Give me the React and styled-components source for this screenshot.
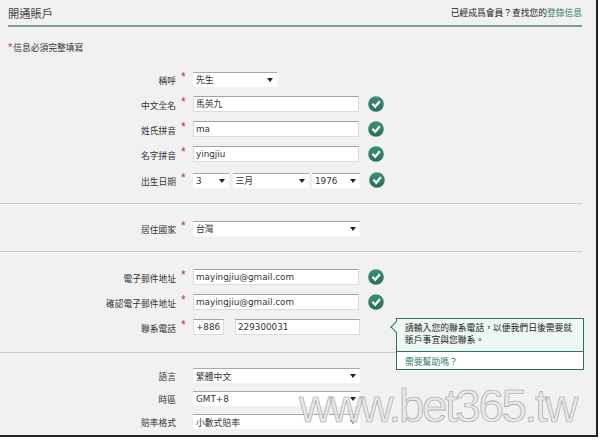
import React from 'react';
import styled, { createGlobalStyle } from 'styled-components';

const GlobalStyle = createGlobalStyle`
  html, body {
    margin: 0;
    padding: 0;
    background: #fff;
  }
`;

const CheckIcon = () => (
  <CheckSvg viewBox="0 0 16 16">
    <defs>
      <linearGradient id="checkFill" x1="0" y1="0" x2="0" y2="1">
        <stop offset="0" stopColor="#3f8f78" />
        <stop offset="1" stopColor="#23705a" />
      </linearGradient>
    </defs>
    <circle cx="8" cy="8" r="7.8" fill="url(#checkFill)" />
    <path d="M4.4 7.8 L7.2 10.8 L11.8 5.2" fill="none" stroke="#fff" strokeWidth="2.2" />
  </CheckSvg>
);

const Select = ({ width, children }) => (
  <SelectBox $width={width}>
    <span>{children}</span>
    <Caret />
  </SelectBox>
);

const Row = ({ label, required, valid, tight, children }) => (
  <FormRow $tight={tight}>
    <Label>{label}</Label>
    <Star>{required ? '*' : ''}</Star>
    <Controls>{children}</Controls>
    {valid && <CheckIcon />}
  </FormRow>
);

const App = () => (
  <Page>
    <GlobalStyle />
    <Header>
      <Title>開通賬戶</Title>
      <HeaderNote>
        已經成爲會員？查找您的<GreenLink>登錄信息</GreenLink>
      </HeaderNote>
    </Header>
    <Notice>
      <NoticeStar>*</NoticeStar>信息必須完整填寫
    </Notice>

    <Section $top={0} $bottom={11}>
      <Row label="稱呼" required>
        <Select width={84}>先生</Select>
      </Row>
      <Row label="中文全名" required valid>
        <TextInput $width={166} readOnly value="馬英九" />
      </Row>
      <Row label="姓氏拼音" required valid>
        <TextInput $width={166} readOnly value="ma" />
      </Row>
      <Row label="名字拼音" required valid>
        <TextInput $width={166} readOnly value="yingjiu" />
      </Row>
      <Row label="出生日期" required valid>
        <Select width={36}>3</Select>
        <Select width={76}>三月</Select>
        <Select width={48}>1976</Select>
      </Row>
    </Section>

    <Section $top={11} $bottom={10.5}>
      <Row label="居住國家" required>
        <Select width={167}>台灣</Select>
      </Row>
    </Section>

    <Section $top={12} $bottom={12}>
      <Row label="電子郵件地址" required valid>
        <TextInput $width={166} readOnly value="mayingjiu@gmail.com" />
      </Row>
      <Row label="確認電子郵件地址" required valid>
        <TextInput $width={166} readOnly value="mayingjiu@gmail.com" />
      </Row>
      <Row label="聯系電話" required>
        <TextInput $width={31} readOnly value="+886" />
        <PhoneGap />
        <TextInput $width={125} readOnly value="229300031" />
      </Row>
    </Section>

    <Section $top={11} $last>
      <Row label="語言" tight>
        <Select width={167}>繁體中文</Select>
      </Row>
      <Row label="時區" tight>
        <Select width={167}>GMT+8</Select>
      </Row>
      <Row label="賠率格式" tight>
        <Select width={167}>小數式賠率</Select>
      </Row>
    </Section>

    <Tooltip>
      <TooltipBody>請輸入您的聯系電話，以便我們日後需要就賬戶事宜與您聯系。</TooltipBody>
      <TooltipHelp>需要幫助嗎？</TooltipHelp>
    </Tooltip>
    <Watermark>www.bet365.tw</Watermark>
  </Page>
);

const cjk = `"Liberation Sans", "Noto Sans CJK TC", sans-serif`;
const latin = `"DejaVu Sans", "Noto Sans CJK TC", sans-serif`;

const Page = styled.div`
  position: relative;
  box-sizing: border-box;
  width: 598px;
  height: 437px;
  padding: 0 14px 0 8px;
  background: #f1f1f1;
  border-right: 2px solid #222;
  border-bottom: 2px solid #222;
  overflow: hidden;
  font-family: ${cjk};
  color: #333;
`;

const Header = styled.div`
  display: flex;
  align-items: center;
  justify-content: space-between;
  height: 25px;
  border-bottom: 2px solid #7a9f92;
`;

const Title = styled.div`
  font-size: 11.25px;
  color: #444;
`;

const HeaderNote = styled.div`
  font-size: 8.75px;
  color: #222;
`;

const GreenLink = styled.span`
  color: #2f7d65;
`;

const Notice = styled.div`
  height: 39px;
  padding-top: 14px;
  box-sizing: border-box;
  font-size: 8.75px;
  line-height: 13px;
  color: #333;
`;

const NoticeStar = styled.span`
  color: #b0394f;
  font-size: 11px;
  margin-right: 1px;
`;

const Section = styled.div`
  padding: ${p => p.$top}px 0 ${p => p.$bottom || 0}px;
  border-bottom: ${p => (p.$last ? 'none' : '1px solid #c6cfcb')};
  margin: 0 0 0 -8px;
`;

const FormRow = styled.div`
  display: flex;
  align-items: center;
  height: ${p => (p.$tight ? 23 : 25.25)}px;
`;

const Label = styled.div`
  width: 176px;
  padding-top: 3px;
  text-align: right;
  font-size: 8.75px;
  color: #333;
`;

const Star = styled.div`
  width: 17px;
  box-sizing: border-box;
  padding: 0 0 4px 5px;
  font-size: 12px;
  line-height: 12px;
  color: #b0394f;
`;

const Controls = styled.div`
  display: flex;
  align-items: center;
  gap: 3.5px;
`;

const TextInput = styled.input`
  box-sizing: border-box;
  width: ${p => p.$width}px;
  height: 16px;
  padding: 0 2px;
  background: #fff;
  border: 1px solid #dcdcdc;
  border-top: 1px solid #a2a2a2;
  border-radius: 0;
  outline: none;
  font-family: ${latin};
  font-size: 8.8px;
  color: #333;
`;

const PhoneGap = styled.div`
  width: 4px;
`;

const SelectBox = styled.div`
  box-sizing: border-box;
  display: flex;
  align-items: center;
  justify-content: space-between;
  width: ${p => p.$width}px;
  height: 15px;
  margin-top: 1px;
  padding: 0 4px 0 3px;
  background: #fff;
  border-top: 1px solid #a8a8a8;
  font-family: ${latin};
  font-size: 8.8px;
  color: #333;
`;

const Caret = styled.i`
  width: 0;
  height: 0;
  border-left: 3px solid transparent;
  border-right: 3px solid transparent;
  border-top: 4px solid #222;
`;

const CheckSvg = styled.svg`
  width: 16px;
  height: 16px;
  margin-left: 9px;
`;

const Tooltip = styled.div`
  position: absolute;
  left: 396px;
  top: 318px;
  box-sizing: border-box;
  width: 188px;
  height: 52px;
  background: #fff;
  border: 1px solid #2f6f5c;

  &::before {
    content: '';
    position: absolute;
    left: -5px;
    top: 4px;
    width: 7px;
    height: 7px;
    background: #edf7f4;
    border-left: 1px solid #2f6f5c;
    border-bottom: 1px solid #2f6f5c;
    transform: rotate(45deg);
  }
`;

const TooltipBody = styled.div`
  box-sizing: border-box;
  height: 33px;
  padding: 4px 8px 0;
  background: #edf7f4;
  border-bottom: 1px solid #2f6f5c;
  font-size: 8.8px;
  line-height: 11.5px;
  color: #222;
`;

const TooltipHelp = styled.div`
  padding: 4px 8px 0;
  font-size: 8.8px;
  line-height: 12px;
  color: #2f7d65;
`;

const Watermark = styled.div`
  position: absolute;
  left: 299px;
  top: 381px;
  font-family: "Liberation Sans", sans-serif;
  font-size: 46px;
  line-height: 50px;
  letter-spacing: -2.5px;
  white-space: nowrap;
  color: rgba(226, 226, 226, 0.75);
  -webkit-text-stroke: 0.6px #9c9c9c;
  text-shadow: 1px 1px 1px rgba(255, 255, 255, 0.8);
`;

export default App;
